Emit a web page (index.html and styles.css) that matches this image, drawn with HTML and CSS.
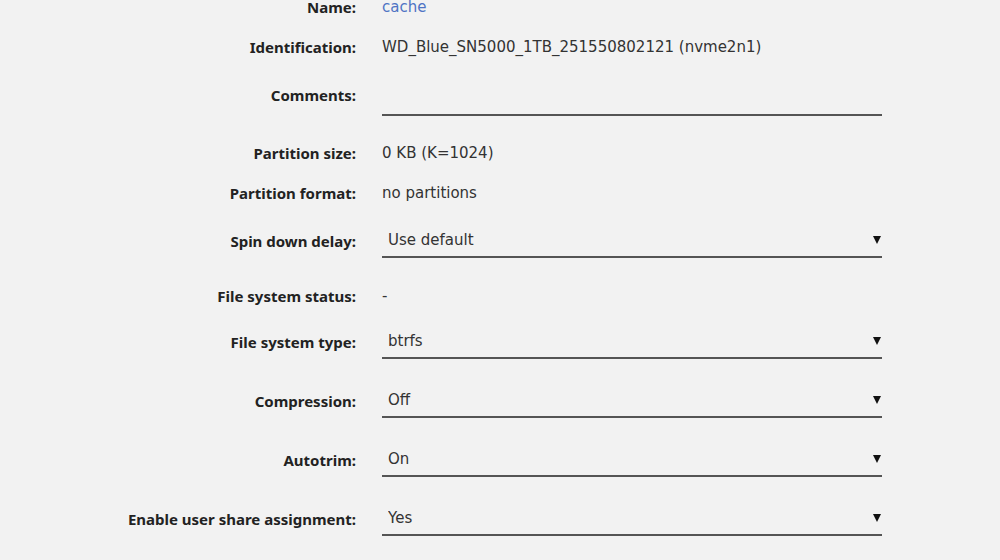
FILE: index.html
```html
<!DOCTYPE html>
<html lang="en">
<head>
  <meta charset="UTF-8">
  <meta name="viewport" content="width=device-width, initial-scale=1.0">
  <title>Disk Settings - cache</title>
  <link rel="stylesheet" href="styles.css">
</head>
<body>
  <form class="settings">
    <div class="row">
      <span class="label">Name:</span>
      <span class="value"><a href="#">cache</a></span>
    </div>
    <div class="row">
      <span class="label">Identification:</span>
      <span class="value">WD_Blue_SN5000_1TB_251550802121 (nvme2n1)</span>
    </div>
    <div class="row field comments">
      <span class="label">Comments:</span>
      <input type="text" class="text-input" value="">
    </div>
    <div class="row">
      <span class="label">Partition size:</span>
      <span class="value">0 KB (K=1024)</span>
    </div>
    <div class="row">
      <span class="label">Partition format:</span>
      <span class="value">no partitions</span>
    </div>
    <div class="row field spin">
      <span class="label">Spin down delay:</span>
      <span class="select-wrap">
        <select>
          <option>Use default</option>
          <option>Never</option>
          <option>15 minutes</option>
        </select>
      </span>
    </div>
    <div class="row">
      <span class="label">File system status:</span>
      <span class="value">-</span>
    </div>
    <div class="row field">
      <span class="label">File system type:</span>
      <span class="select-wrap">
        <select>
          <option>btrfs</option>
          <option>xfs</option>
          <option>zfs</option>
        </select>
      </span>
    </div>
    <div class="row field">
      <span class="label">Compression:</span>
      <span class="select-wrap">
        <select>
          <option>Off</option>
          <option>On</option>
        </select>
      </span>
    </div>
    <div class="row field">
      <span class="label">Autotrim:</span>
      <span class="select-wrap">
        <select>
          <option>On</option>
          <option>Off</option>
        </select>
      </span>
    </div>
    <div class="row field">
      <span class="label">Enable user share assignment:</span>
      <span class="select-wrap">
        <select>
          <option>Yes</option>
          <option>No</option>
        </select>
      </span>
    </div>
  </form>
</body>
</html>
```

FILE: styles.css
```css
:root {
  --fundo: #f2f2f2;
  --texto: #333;
  --rotulo: #222;
  --linha: #555;
  --link: #4f74c4;
}

body {
  margin: 0;
  padding: 0;
  background: var(--fundo);
  font-family: "DejaVu Sans", "Noto Sans", sans-serif;
  font-size: 15px;
  color: var(--texto);
  overflow: hidden;
}

.settings {
  margin-top: -13px;
}

.row {
  display: grid;
  grid-template-columns: 356px 500px;
  column-gap: 26px;
  align-items: center;
  height: 40px;
}

.label {
  text-align: right;
  font-family: "Noto Sans", "DejaVu Sans", sans-serif;
  font-weight: bold;
  color: var(--rotulo);
}

.value a {
  color: var(--link);
  text-decoration: none;
}

.row.field {
  height: auto;
  padding: 8px 0 16px;
}

.row.comments {
  padding: 14px 0 17px;
}

.row.comments .label {
  align-self: start;
  line-height: 20px;
  margin-top: 4px;
}

.row.spin {
  padding: 10px 0 18px;
}

.text-input,
select {
  box-sizing: border-box;
  width: 500px;
  height: 35px;
  margin: 0;
  border: none;
  border-bottom: 2px solid var(--linha);
  background: transparent;
  font-family: inherit;
  font-size: 15px;
  color: var(--texto);
  outline: none;
}

select {
  appearance: none;
  -webkit-appearance: none;
  padding: 0 20px 0 6px;
  border-radius: 0;
  cursor: pointer;
}

.select-wrap {
  position: relative;
  display: block;
  width: 500px;
}

/* seta do select */
.select-wrap::after {
  content: "";
  position: absolute;
  right: 1px;
  top: 13px;
  border-left: 4px solid transparent;
  border-right: 4px solid transparent;
  border-top: 8px solid #111;
  pointer-events: none;
}
```
